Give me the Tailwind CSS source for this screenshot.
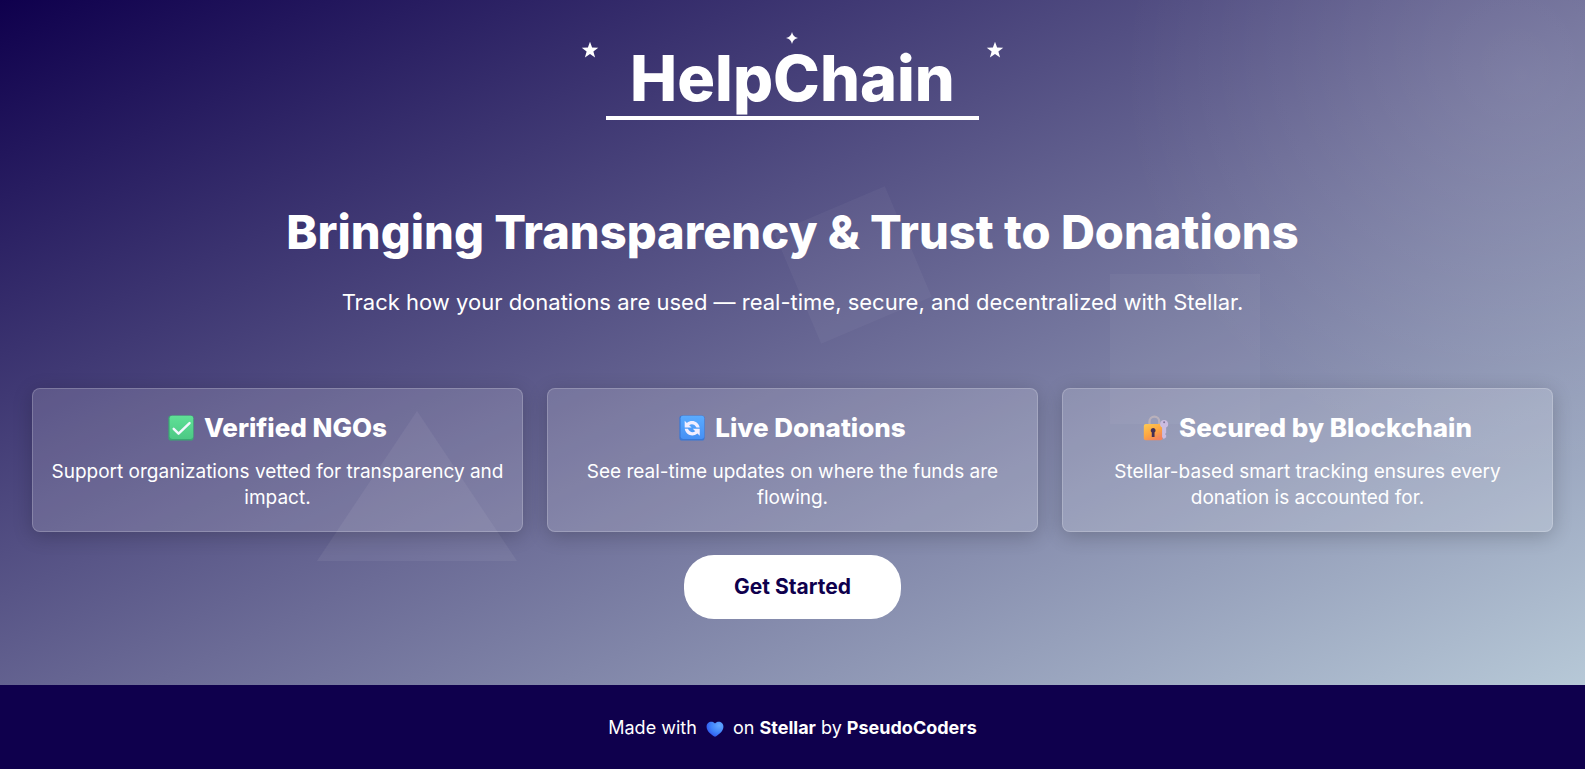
<!DOCTYPE html>
<html lang="en">
<head>
<meta charset="utf-8">
<meta name="viewport" content="width=device-width, initial-scale=1">
<title>HelpChain</title>
<script src="https://cdn.jsdelivr.net/npm/@tailwindcss/browser@4"></script>
</head>
<body class="relative flex min-h-screen flex-col overflow-x-hidden bg-[radial-gradient(circle_at_96%_10%,rgb(255_255_255/0.11),transparent_24%),linear-gradient(155deg,#0f004d,#6b6b96_50%,#c0d4df)] font-['Inter',sans-serif] text-white">
  <!-- floating background shapes -->
  <div class="pointer-events-none absolute inset-0 overflow-hidden" aria-hidden="true">
    <div class="absolute left-[20%] top-[411px] h-[150px] w-[200px] bg-white/6 [clip-path:polygon(50%_0,100%_100%,0_100%)]"></div>
    <div class="absolute left-[50%] top-[205px] size-[120px] rotate-[-23deg] bg-white/4"></div>
    <div class="absolute left-[70%] top-[274px] size-[150px] bg-white/4"></div>
  </div>

  <header class="relative flex justify-center pt-[40px]">
    <div class="relative border-b-4 border-white px-6 pt-0.5 pb-0.5">
      <h1 class="text-[63px] leading-[72px] font-extrabold">HelpChain</h1>
      <svg class="absolute -left-[25px] top-px size-[18px]" viewBox="0 0 24 24" fill="white" aria-hidden="true"><path d="M12 1l2.8 7.8 8.2.3-6.500 5 2.300 7.900L12 17.400 5.200 22l2.300-7.900L1 9.100l8.200-.3z"/></svg>
      <svg class="absolute left-1/2 -top-2 size-3 -translate-x-1/2" viewBox="0 0 24 24" fill="white" aria-hidden="true"><path d="M12 0c1.500 7 5 10.500 12 12-7 1.500-10.500 5-12 12-1.500-7-5-10.500-12-12C7 10.500 10.500 7 12 0z"/></svg>
      <svg class="absolute -right-[25px] top-px size-[18px]" viewBox="0 0 24 24" fill="white" aria-hidden="true"><path d="M12 1l2.8 7.800 8.200.3-6.500 5 2.300 7.900L12 17.400 5.200 22l2.300-7.900L1 9.100l8.200-.3z"/></svg>
    </div>
  </header>

  <main class="relative flex grow flex-col items-center px-8 pt-[78px] pb-16">
    <h2 class="text-center text-[47px] leading-[68px] font-extrabold">Bringing Transparency &amp; Trust to Donations</h2>
    <p class="mt-5 text-center text-[22px] leading-8">Track how your donations are used — real-time, secure, and decentralized with Stellar.</p>

    <section class="mt-[70px] grid w-full grid-cols-1 gap-6 md:grid-cols-3">
      <article class="rounded-lg border border-white/20 bg-white/15 px-4 py-5 text-center shadow-[0_4px_20px_rgb(0_0_0/0.2)]">
        <h3 class="flex items-center justify-center gap-2.5 text-[26px] leading-[38px] font-extrabold">
          <svg class="size-[26px]" viewBox="0 0 32 32" aria-hidden="true">
            <defs><linearGradient id="ok" x1="0" y1="0" x2="0" y2="1"><stop offset="0" stop-color="#5fe096"/><stop offset="1" stop-color="#4cc985"/></linearGradient></defs>
            <rect x=".5" y=".5" width="31" height="31" rx="3.500" fill="#3aa873"/><rect x="2" y="1" width="29" height="28.500" rx="3" fill="url(#ok)"/><path d="M7 17l6 6L26.500 10" fill="none" stroke="#f3f8ff" stroke-width="3" stroke-linecap="round" stroke-linejoin="round"/>
          </svg>
          Verified NGOs
        </h3>
        <p class="mt-3 text-[19px] leading-[26px]">Support organizations vetted for transparency and impact.</p>
      </article>
      <article class="rounded-lg border border-white/20 bg-white/15 px-4 py-5 text-center shadow-[0_4px_20px_rgb(0_0_0/0.2)]">
        <h3 class="flex items-center justify-center gap-2.5 text-[26px] leading-[38px] font-extrabold">
          <svg class="size-[26px]" viewBox="0 0 32 32" aria-hidden="true">
            <defs><linearGradient id="sync" x1="0" y1="0" x2="0" y2="1"><stop offset="0" stop-color="#5aabff"/><stop offset="1" stop-color="#4690f5"/></linearGradient></defs>
            <rect x=".5" y=".5" width="31" height="31" rx="3.500" fill="#3978d6"/><rect x="2" y="1" width="29" height="28.500" rx="3" fill="url(#sync)"/>
            <g fill="#f3eeff"><path d="M7 7v8.500h8.500l-3-3c3-2.300 7-1.300 9 3h4C24 7.500 15.500 5 9.700 9.700z"/><path d="M25.500 25.500V17H17l3 3c-3 2.300-7 1.300-9-3H7c1.500 8 10 10.500 15.800 5.800z"/></g>
          </svg>
          Live Donations
        </h3>
        <p class="mt-3 text-[19px] leading-[26px]">See real-time updates on where the funds are flowing.</p>
      </article>
      <article class="rounded-lg border border-white/20 bg-white/15 px-4 py-5 text-center shadow-[0_4px_20px_rgb(0_0_0/0.2)]">
        <h3 class="flex items-center justify-center gap-2.5 text-[26px] leading-[38px] font-extrabold">
          <svg class="size-[26px]" viewBox="0 0 32 32" aria-hidden="true">
            <defs><linearGradient id="lock" x1="0" y1="0" x2=".6" y2="1"><stop offset="0" stop-color="#ffcb52"/><stop offset=".6" stop-color="#fda640"/><stop offset="1" stop-color="#f4825c"/></linearGradient></defs>
            <path d="M8 13V8a6 6 0 0 1 12 0v5" fill="none" stroke="#b9b1bb" stroke-width="2.800"/>
            <rect x="1" y="11" width="23" height="20" rx="2.500" fill="url(#lock)"/>
            <path d="M12.500 16a3 3 0 0 0-1.700 5.500V27h3.400v-5.500A3 3 0 0 0 12.500 16z" fill="#432f55"/>
            <path d="M26 6a5 5 0 0 0-2.500 9.300V27l2 2.500 3-2v-2.500l-1.500-1.500 1.500-1.500v-6.700A5 5 0 0 0 26 6z" fill="#cbbce0"/><circle cx="26" cy="9" r="1.200" fill="#837399"/>
          </svg>
          Secured by Blockchain
        </h3>
        <p class="mt-3 text-[19px] leading-[26px]">Stellar-based smart tracking ensures every donation is accounted for.</p>
      </article>
    </section>

    <button type="button" class="mt-[23px] rounded-[30px] bg-white px-[50px] py-4 text-[21px] leading-8 font-bold text-[#0f004d]">Get Started</button>
  </main>

  <footer class="relative bg-[#0f004d] pt-[29px] pb-[27px] text-center text-lg leading-7">
    <p>Made with
      <svg class="mx-1 inline-block size-[18px] align-[-4px]" viewBox="0 0 32 32" aria-hidden="true">
        <defs><radialGradient id="heart" cx=".75" cy=".25" r=".8"><stop offset="0" stop-color="#65a8ff"/><stop offset=".6" stop-color="#3f83fa"/><stop offset="1" stop-color="#3158ee"/></radialGradient></defs>
        <path d="M16 6C12 1 1 2 1 12c0 8 8 13 13 17q2 1.500 4 0c5-4 13-9 13-17C31 2 20 1 16 6z" fill="url(#heart)"/>
      </svg>
      on <strong>Stellar</strong> by <strong>PseudoCoders</strong></p>
  </footer>
</body>
</html>
